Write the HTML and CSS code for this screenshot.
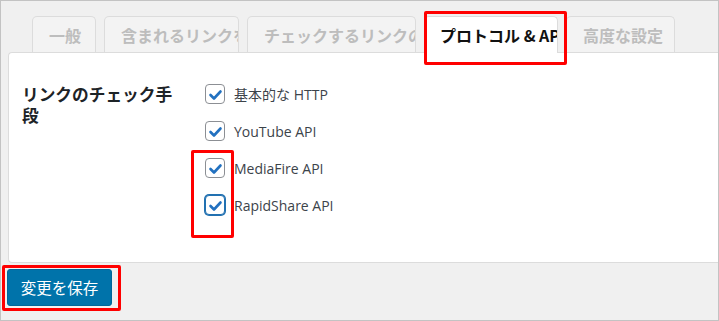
FILE: index.html
```html
<!DOCTYPE html>
<html lang="ja">
<head>
<meta charset="utf-8">
<title>設定</title>
<link rel="stylesheet" href="styles.css">
</head>
<body>
<div class="screen">
  <div class="tabs">
    <div class="tab tab-general">一般</div>
    <div class="tab tab-where">含まれるリンクを探す場所</div>
    <div class="tab tab-which">チェックするリンクの種類</div>
    <div class="tab tab-protocol active">プロトコル &amp; API</div>
    <div class="tab tab-advanced">高度な設定</div>
  </div>
  <div class="panel">
    <div class="field-label">リンクのチェック手段</div>
    <div class="options">
      <div class="option">
        <span class="checkbox"><svg viewBox="0 0 18 18" width="18" height="18"><path d="M4.5 10 L8 13.5 L14.5 6.5" fill="none" stroke="#2271c0" stroke-width="2.6" stroke-linecap="round" stroke-linejoin="round"/></svg></span>
        <span class="option-text">基本的な HTTP</span>
      </div>
      <div class="option">
        <span class="checkbox"><svg viewBox="0 0 18 18" width="18" height="18"><path d="M4.5 10 L8 13.5 L14.5 6.5" fill="none" stroke="#2271c0" stroke-width="2.6" stroke-linecap="round" stroke-linejoin="round"/></svg></span>
        <span class="option-text">YouTube API</span>
      </div>
      <div class="option">
        <span class="checkbox"><svg viewBox="0 0 18 18" width="18" height="18"><path d="M4.5 10 L8 13.5 L14.5 6.5" fill="none" stroke="#2271c0" stroke-width="2.6" stroke-linecap="round" stroke-linejoin="round"/></svg></span>
        <span class="option-text">MediaFire API</span>
      </div>
      <div class="option">
        <span class="checkbox focused"><svg viewBox="0 0 18 18" width="18" height="18"><path d="M4.5 10 L8 13.5 L14.5 6.5" fill="none" stroke="#2271c0" stroke-width="2.6" stroke-linecap="round" stroke-linejoin="round"/></svg></span>
        <span class="option-text">RapidShare API</span>
      </div>
    </div>
  </div>
  <button class="save" type="button">変更を保存</button>

  <div class="mark mark-tab"></div>
  <div class="mark mark-checks"></div>
  <div class="mark mark-button"></div>
</div>
</body>
</html>
```

FILE: styles.css
```css
html, body {
  margin: 0;
  padding: 0;
  background: #ffffff;
}

.screen {
  position: relative;
  width: 719px;
  height: 321px;
  box-sizing: border-box;
  border: 1px solid #c3c3c3;
  background: #f0f0f0;
  overflow: hidden;
  font-family: "Noto Sans CJK JP", "Open Sans", sans-serif;
}

.tabs {
  display: flex;
  align-items: flex-start;
  gap: 8px;
  padding: 15px 0 0 31px;
  height: 36px;
}

.tab {
  position: relative;
  height: 36px;
  box-sizing: border-box;
  border: 1px solid #dcdcdc;
  border-bottom: none;
  border-radius: 5px 5px 0 0;
  background: #f3f3f3;
  padding: 1px 0 0 16px;
  font-size: 16px;
  font-weight: bold;
  line-height: 34px;
  color: #bdbdbd;
  white-space: nowrap;
  overflow: hidden;
}

.tab.active {
  height: 37px;
  margin-bottom: -1px;
  background: #ffffff;
  color: #111111;
  z-index: 1;
  padding-left: 15px;
}

.tab-general { width: 64px; }
.tab-where { width: 135px; }
.tab-which { width: 169px; }
.tab-protocol { width: 134px; }
.tab-advanced { width: 109px; }

.panel {
  margin-left: 7px;
  height: 211px;
  box-sizing: border-box;
  background: #ffffff;
  border: 1px solid #dcdcdc;
  border-right: none;
  border-radius: 4px 0 0 4px;
  display: grid;
  grid-template-columns: 183px 1fr;
  align-items: start;
  padding: 31px 0 0 13px;
}

.field-label {
  width: 160px;
  font-size: 16.7px;
  font-weight: bold;
  line-height: 21px;
  color: #1d2327;
}

.options {
  display: flex;
  flex-direction: column;
}

.option {
  display: flex;
  align-items: flex-start;
  gap: 9px;
  height: 37px;
}

.checkbox {
  width: 20px;
  height: 20px;
  box-sizing: border-box;
  border: 1px solid #8c8f94;
  border-radius: 4px;
  background: #ffffff;
  display: flex;
  align-items: center;
  justify-content: center;
  flex: none;
}

.checkbox svg {
  display: block;
}

.checkbox.focused {
  border-color: #2271b1;
  box-shadow: 0 0 0 1px #2271b1;
}

.option-text {
  font-family: "Open Sans", "Noto Sans CJK JP", sans-serif;
  font-size: 14px;
  line-height: 22px;
  color: #3c434a;
}

.save {
  display: block;
  margin: 6px 0 0 6px;
  width: 105px;
  height: 37px;
  padding: 0;
  box-sizing: border-box;
  background: #0073aa;
  border: 1px solid #006799;
  border-radius: 3px;
  color: #ffffff;
  font-family: "Noto Sans CJK JP", sans-serif;
  font-size: 15.5px;
  line-height: 35px;
}

.mark {
  position: absolute;
  box-sizing: border-box;
  border: 3px solid #ff0000;
  border-radius: 2px;
  z-index: 5;
  pointer-events: none;
}

.mark-tab {
  left: 423px;
  top: 10px;
  width: 143px;
  height: 54px;
}

.mark-checks {
  left: 190px;
  top: 149px;
  width: 43px;
  height: 88px;
}

.mark-button {
  left: 1px;
  top: 264px;
  width: 119px;
  height: 46px;
}
```
